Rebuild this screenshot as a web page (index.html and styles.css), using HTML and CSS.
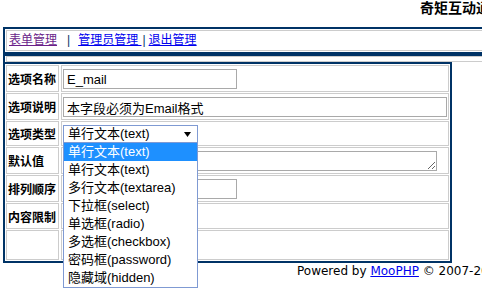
FILE: index.html
```html
<!DOCTYPE html>
<html lang="zh-CN">
<head>
    <meta charset="UTF-8">
    <title>表单管理</title>
    <link rel="stylesheet" href="styles.css">
</head>
<body>

<div class="page">
    <div class="site-title">奇矩互动通用表单管理系统</div>

    <div class="topbar">
        <div class="nav-cell">
            <a class="visited" href="#">表单管理</a><span class="sep">|</span><a href="#">管理员管理&nbsp;</a><span class="sep sep-tight">|</span><a href="#">退出管理</a>
        </div>
    </div>
    <div class="spacer-box"><div class="spacer-cell"></div></div>

    <div class="form-box">
        <div class="cell label">选项名称</div>
        <div class="cell value"><input class="field short" type="text" value="E_mail"></div>

        <div class="cell label">选项说明</div>
        <div class="cell value"><input class="field long" type="text" value="本字段必须为Email格式"></div>

        <div class="cell label row-type">选项类型</div>
        <div class="cell value row-type">
            <div class="select-wrap">
                <div class="select">
                    <span>单行文本(text)</span>
                    <svg width="7" height="5" viewBox="0 0 7 5"><polygon points="0,0 7,0 3.5,5" fill="#000"/></svg>
                </div>
                <ul class="dropdown">
                    <li class="active">单行文本(text)</li>
                    <li>单行文本(text)</li>
                    <li>多行文本(textarea)</li>
                    <li>下拉框(select)</li>
                    <li>单选框(radio)</li>
                    <li>多选框(checkbox)</li>
                    <li>密码框(password)</li>
                    <li>隐藏域(hidden)</li>
                </ul>
            </div>
        </div>

        <div class="cell label">默认值</div>
        <div class="cell value"><textarea class="area" rows="1"></textarea></div>

        <div class="cell label">排列顺序</div>
        <div class="cell value"><input class="field short" type="text" value=""></div>

        <div class="cell label row-limit">内容限制</div>
        <div class="cell value row-limit"></div>

        <div class="cell label row-last"></div>
        <div class="cell value row-last"></div>
    </div>

    <div class="footer">Powered by <a href="#">MooPHP</a> &copy; 2007-2009 Comsenz Inc.</div>
</div>

</body>
</html>
```

FILE: styles.css
```css
html {
    overflow: hidden;
}
body {
    margin: 0;
    min-height: 297px;
    font-family: "Liberation Sans", "Noto Sans CJK SC", sans-serif;
    font-size: 12px;
    color: #000;
    background-color: #fff;
}
.page {
    width: 640px;
    min-height: 297px;
    padding-left: 3px;
}
.site-title {
    height: 27px;
    padding-left: 417px;
    font-size: 14px;
    font-weight: bold;
    line-height: 17px;
    white-space: nowrap;
}

/* barra de navegação */
.topbar {
    border: 2px solid #003366;
    padding: 1px;
}
.nav-cell {
    height: 19px;
    border: 1px solid #ccc;
    padding-left: 2px;
    line-height: 19px;
    white-space: nowrap;
}
.nav-cell a {
    color: #0000ee;
    text-decoration: underline;
}
.nav-cell a.visited {
    color: #6b1f8a;
}
.sep {
    margin: 0 8px 0 10px;
    color: #003366;
}
.sep-tight {
    margin: 0 3px 0 1px;
}
.spacer-box {
    border: 2px solid #003366;
    border-bottom: none;
    padding: 0 1px;
}
.spacer-cell {
    height: 4px;
    border: 1px solid #ccc;
}

/* tabela do formulário */
.form-box {
    width: 449px;
    box-sizing: border-box;
    border: 2px solid #003366;
    padding: 1px;
    display: grid;
    grid-template-columns: 53px 1fr;
    column-gap: 2px;
    row-gap: 1px;
}
.cell {
    box-sizing: border-box;
    height: 27px;
    border: 1px solid #ccc;
    display: flex;
    align-items: center;
}
.label {
    padding-left: 1px;
    font-weight: bold;
    white-space: nowrap;
}
.value {
    padding: 1px 1px 0 1px;
}
.row-type {
    height: 25px;
}
.row-limit {
    height: 26px;
}
.row-last {
    height: 30px;
}
.field {
    box-sizing: border-box;
    height: 20px;
    margin: 0;
    border: 1px solid #a9a9a9;
    padding: 0 3px;
    font-family: "Liberation Sans", "Noto Sans CJK SC", sans-serif;
    font-size: 13px;
    color: #000;
    outline: none;
}
.short {
    width: 174px;
}
.long {
    width: 384px;
}
.area {
    box-sizing: border-box;
    width: 374px;
    height: 20px;
    margin: 0;
    border: 1px solid #a9a9a9;
    padding: 0 3px;
    font-size: 13px;
    resize: both;
    display: block;
}

/* select aberto */
.select-wrap {
    position: relative;
    width: 135px;
}
.select {
    box-sizing: border-box;
    height: 18px;
    border: 1px solid #7f9ad3;
    padding: 0 6px 0 4px;
    display: flex;
    align-items: center;
    justify-content: space-between;
    font-size: 13px;
    line-height: 16px;
}
.dropdown {
    position: absolute;
    top: 18px;
    left: 0;
    width: 135px;
    box-sizing: border-box;
    margin: 0;
    padding: 0;
    list-style: none;
    background-color: #fff;
    border: 1px solid #7f9ad3;
    border-top: none;
    z-index: 2;
}
.dropdown li {
    height: 18px;
    line-height: 18px;
    padding-left: 4px;
    font-size: 13px;
    white-space: nowrap;
}
.dropdown li.active {
    background-color: #1e90ff;
    color: #fff;
}

.footer {
    padding-left: 294px;
    font-family: "DejaVu Sans", sans-serif;
    font-size: 12px;
    line-height: 14px;
    margin-top: 1px;
    white-space: nowrap;
}
.footer a {
    color: #0000ee;
}
```
